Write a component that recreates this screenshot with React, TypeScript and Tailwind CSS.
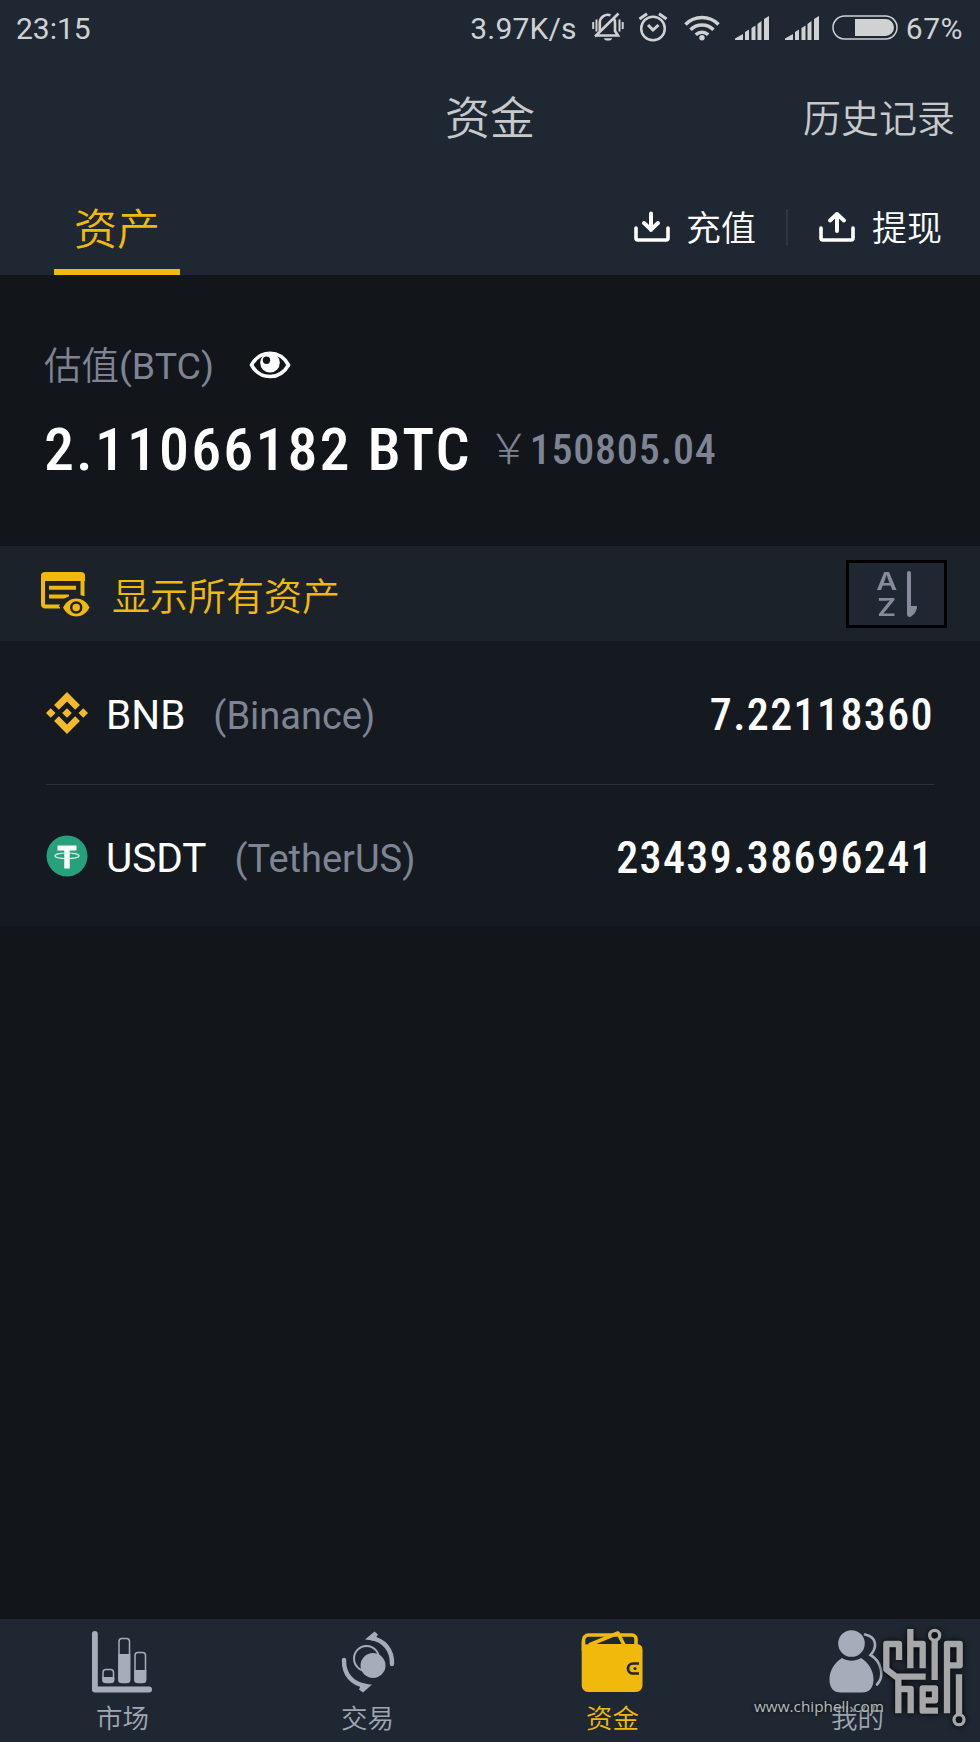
import React, { useState } from "react";

type Asset = {
  symbol: string;
  name: string;
  amount: string;
  icon: React.ReactNode;
};

const BnbIcon = () => (
  <svg width="42" height="42" viewBox="0 0 126.6 126.6" fill="#f3ba2f">
    <path d="M38.7 53.2 63.3 28.6l24.6 24.6 14.3-14.3L63.3 0 24.4 38.9zM0 63.3 14.3 49l14.3 14.3-14.3 14.3zM38.7 73.4 63.3 98l24.6-24.6 14.3 14.3-38.9 38.9-38.9-38.9zM98 63.3 112.3 49l14.3 14.3-14.3 14.3zM77.8 63.3 63.3 48.8 48.8 63.3l14.5 14.5z" />
  </svg>
);

const TetherIcon = () => (
  <svg width="42" height="42" viewBox="0 0 42 42" fill="none">
    <circle cx="21" cy="21" r="20.5" fill="#26a17b" />
    <path d="M11.5 10.5h19v5h-6.8v18h-5.4v-18h-6.8z" fill="#fff" />
    <ellipse cx="21" cy="20.8" rx="12.2" ry="2.8" stroke="#d5efe6" strokeWidth="1.2" />
  </svg>
);

const assets: Asset[] = [
  { symbol: "BNB", name: "Binance", amount: "7.22118360", icon: <BnbIcon /> },
  { symbol: "USDT", name: "TetherUS", amount: "23439.38696241", icon: <TetherIcon /> },
];

const SignalIcon = () => (
  <svg width="34" height="24" viewBox="0 0 34 24" fill="currentColor">
    <path d="M0 24v-1.5L8 18v6zM10 24v-8l4-2.5V24zM16.5 24V12l4-2.5V24zM22.5 24V8l4-3v19zM29 24V3l5-3v24z" />
  </svg>
);

const StatusBar = () => (
  <div className="flex h-[57px] items-center pl-[16px] pr-[17px] text-[30px] text-[#cfd1d3]">
    <span>23:15</span>
    <span className="ml-auto tracking-[0.2px]">3.97K/s</span>
    <svg className="ml-[15px] -mt-[3px]" width="32" height="30" viewBox="0 0 32 30" fill="none" stroke="currentColor">
      <path d="M5 23.5h21l-3-4.5v-8.5a7 7 0 0 0-1.5-4.5M18.5 3.3a8 8 0 0 0-10.7 7.2V19" strokeWidth="2.6" />
      <path d="M3 24.5 26.5 1.5" strokeWidth="2.6" />
      <path d="M12 26.2h8a4 2.4 0 0 1-8 0z" fill="currentColor" stroke="none" />
      <path d="M4.5 7.5v12M1.2 10v7M27.5 7.5v12M30.7 10v7" strokeWidth="2" />
    </svg>
    <svg className="ml-[14px] -mt-[3px]" width="30" height="30" viewBox="0 0 30 30" fill="none" stroke="currentColor">
      <circle cx="15" cy="16.5" r="11.8" strokeWidth="2.5" />
      <path d="m10 13 5 5 5.5-5" strokeWidth="3" />
      <path d="M1.5 7 9 1.8M28.5 7 21 1.8" strokeWidth="3" />
    </svg>
    <svg className="ml-[16px] -mt-[3px]" width="36" height="27" viewBox="0 0 36 27" fill="none" stroke="currentColor" strokeWidth="3.5">
      <path d="M1.5 10.5a23 23 0 0 1 33 0M6.5 15.8a16 16 0 0 1 23 0M11.8 20.8a9 9 0 0 1 12.4 0" />
      <circle cx="18" cy="23.7" r="2.7" fill="currentColor" stroke="none" />
    </svg>
    <span className="ml-[15px] -mt-[2px]">
      <SignalIcon />
    </span>
    <span className="ml-[16px] -mt-[2px]">
      <SignalIcon />
    </span>
    <svg className="ml-[13px] -mt-[3px]" width="66" height="25" viewBox="0 0 66 25" fill="none">
      <rect x="1" y="1" width="64" height="23" rx="11.5" stroke="currentColor" strokeWidth="1.5" />
      <path d="M23 4h30.5a8.5 8.5 0 0 1 0 17H23z" fill="currentColor" />
    </svg>
    <span className="ml-[8px] tracking-[0.5px]">67%</span>
  </div>
);

const TransferIcon = ({ up = false }: { up?: boolean }) => (
  <svg width="38" height="32" viewBox="0 0 38 32" fill="none" stroke="#fff" strokeWidth="4" strokeLinecap="round" strokeLinejoin="round">
    <path d="M3 17v10a2 2 0 0 0 2 2h28a2 2 0 0 0 2-2V17" strokeWidth="3.6" />
    {up ? (
      <path d="M19 20V3M12 9.5 19 3l7 6.5" />
    ) : (
      <path d="M18 2.5V19M11 12l7 6.5 7-6.5" />
    )}
  </svg>
);

const EyeIcon = () => (
  <svg width="42" height="28" viewBox="0 0 42 28" fill="none">
    <path d="M2.5 14C7 6 13.5 2.3 21 2.3S35 6 39.5 14C35 22 28.5 25.5 21 25.5S7 22 2.5 14z" stroke="#fff" strokeWidth="3.6" strokeLinejoin="round" />
    <circle cx="21" cy="11.8" r="9.8" fill="#fff" />
    <circle cx="17.5" cy="9.2" r="3.7" fill="#12161b" />
  </svg>
);

const ShowAssetsIcon = () => (
  <svg className="mt-[3px]" width="50" height="46" viewBox="0 0 50 46" fill="none">
    <path d="M20 34.5H5a2.5 2.5 0 0 1-2-2.5V4.5h39.5V24" stroke="#f0b90b" strokeWidth="4" />
    <path d="M1 4a4 4 0 0 1 4-4h36a4 4 0 0 1 4 4v5H1z" fill="#f0b90b" />
    <path d="M9 15.7h27M9 24.5h20" stroke="#f0b90b" strokeWidth="4" />
    <path d="M20.5 35.5C24 29 29 24.5 36.5 24.5S47 29 51 35.5" stroke="#1b222a" strokeWidth="4" />
    <path d="M23 35.5C26 29.5 31 26.5 36.2 26.5S46.5 29.5 49.5 35.5C46.5 41.5 41.4 44.5 36.2 44.5S26 41.5 23 35.5z" fill="#f0b90b" />
    <circle cx="36.2" cy="35.5" r="5" stroke="#1b222a" strokeWidth="2.5" />
  </svg>
);

const MarketIcon = () => (
  <svg width="60" height="62" viewBox="0 0 60 62" fill="none" stroke="#a6adba">
    <path d="M2.8 3v55.5H57" strokeWidth="6" strokeLinecap="round" strokeLinejoin="round" />
    <g strokeWidth="1.5">
      <rect x="11" y="38.5" width="10.5" height="13" rx="3" />
      <rect x="27" y="7.5" width="10.5" height="44" rx="3" />
      <rect x="43" y="21.5" width="10.5" height="30" rx="3" />
    </g>
    <path d="M10.3 46h12v3a3 3 0 0 1-3 3h-6a3 3 0 0 1-3-3zM26.3 23h12v26a3 3 0 0 1-3 3h-6a3 3 0 0 1-3-3zM42.3 39h12v10a3 3 0 0 1-3 3h-6a3 3 0 0 1-3-3z" fill="#a6adba" stroke="none" />
  </svg>
);

const TradeIcon = () => (
  <svg width="54" height="62" viewBox="0 0 54 62" fill="none" stroke="#a6adba">
    <circle cx="25.5" cy="27.5" r="12.5" strokeWidth="2" />
    <circle cx="32" cy="34.5" r="12.5" fill="#a6adba" stroke="none" />
    <path d="M30 7C43 9 51.5 19 51 33M25 55C11 53 2.5 43 3 29" strokeWidth="4.4" strokeLinecap="round" />
    <path d="M24 8.5 33.5.5l3.500 3-4 6zM31 53.5l-9 8-4-3 2.5-5.5z" fill="#a6adba" stroke="none" />
  </svg>
);

const WalletIcon = () => (
  <svg width="62" height="62" viewBox="0 0 62 62" fill="none">
    <path d="M2.5 20V9a5 5 0 0 1 5-5H51a4 4 0 0 1 4 4v8" stroke="#f0b90b" strokeWidth="3.6" />
    <path d="M8 14 37 2l6 12" stroke="#f0b90b" strokeWidth="3.6" strokeLinejoin="round" />
    <path d="M.7 10C4 15 6 13 9 13h47a5.5 5.5 0 0 1 5.5 5.5v36A6.5 6.5 0 0 1 55 61H7a6.5 6.5 0 0 1-6.3-6.5z" fill="#f0b90b" />
    <path d="M58 32.5h-6a5 5 0 0 0 0 10h6" stroke="#1f2832" strokeWidth="2.7" />
    <circle cx="54" cy="37.5" r="1.6" fill="#1f2832" />
  </svg>
);

const ProfileIcon = () => (
  <svg width="54" height="63" viewBox="0 0 54 63" fill="none">
    <circle cx="22.5" cy="13.5" r="13.3" fill="#a6adba" />
    <path d="M13 28c6 3.5 13 3.5 19 0 8 5 12.5 13 12.5 21.5C44.5 58 40 62.5 33 62.5H12C4.5 62.5.5 58 .5 49.5.5 41 5 33 13 28z" fill="#a6adba" />
    <path d="M36 4.5c11 2 13 12 5.5 20.5C52 31 56 46 48 54.5" stroke="#a6adba" strokeWidth="2.6" strokeLinecap="round" />
  </svg>
);

const navItems = [
  { label: "市场", icon: <MarketIcon />, shift: "pr-[2px]" },
  { label: "交易", icon: <TradeIcon />, shift: "" },
  { label: "资金", icon: <WalletIcon />, shift: "pr-[2px]" },
  { label: "我的", icon: <ProfileIcon />, shift: "pr-[3px]" },
];

const Watermark = () => (
  <div className="pointer-events-none absolute right-0 bottom-0 h-[132px] w-[240px]">
    <svg className="drop-shadow-[0_0_3px_#000000]" width="240" height="132" viewBox="0 0 720 396" fill="none" stroke="#a5a7a9" strokeWidth="19" strokeLinejoin="round">
      <path d="M477 150V102H439V178L468 200H557" />
      <path d="M511 57V175M511 102H548V175" />
      <path d="M584 92V210M621 310V102H659V166H621" />
      <path d="M475 200V310M475 237H512V310" />
      <path d="M594 302H548V235H585V271H548M657 193V312" />
      <circle cx="584" cy="76" r="15" strokeWidth="10" />
      <circle cx="657" cy="329" r="15" strokeWidth="10" />
    </svg>
    <span className="absolute top-[86px] left-[14px] font-['Open_Sans','Noto_Sans',sans-serif] text-[15.3px] leading-[20px] whitespace-nowrap text-[#b9bbbd] [text-shadow:0_0_4px_#000000]">
      www.chiphell.com
    </span>
  </div>
);

const App = () => {
  const [tab, setTab] = useState("资金");

  return (
    <div className="relative flex h-[1742px] w-[980px] flex-col overflow-hidden bg-[#12161b] font-[Roboto,'Noto_Sans_CJK_SC',sans-serif] text-white">
      <header className="h-[275px] bg-[#1f2832]">
        <StatusBar />
        <div className="grid h-[120px] grid-cols-3 items-center pt-[4px] pr-[25px] pl-[25px] text-[#c8c9cb]">
          <span />
          <h1 className="text-center text-[45px] leading-none font-[350]">资金</h1>
          <span className="text-right text-[38px] leading-none font-[350]">历史记录</span>
        </div>
        <div className="flex h-[98px] items-stretch pr-[38px] pl-[54px]">
          <div className="flex w-[126px] items-center justify-center border-b-[6px] border-[#f0b90b] pt-[14px] text-[43px] leading-none font-[350] text-[#f0b90b]">
            资产
          </div>
          {/* deposit / withdraw */}
          <div className="ml-auto flex items-center pt-[2px] text-[35px] leading-none font-[350]">
            <TransferIcon />
            <span className="mt-[5px] ml-[15px]">充值</span>
            <div className="mx-[30px] h-[36px] w-[2px] bg-[#2f3842]" />
            <TransferIcon up />
            <span className="mt-[5px] ml-[16px]">提现</span>
          </div>
        </div>
      </header>

      {/* total value */}
      <section className="h-[271px] pt-[66px] pl-[44px]">
        <div className="flex h-[48px] items-center">
          <span className="mt-[3px] text-[37.5px] leading-none font-[350] text-[#7e8493]">
            估值<span className="font-normal">(BTC)</span>
          </span>
          <span className="ml-[35px]">
            <EyeIcon />
          </span>
        </div>
        <div className="mt-[26px] flex h-[70px] items-center">
          <span className="font-['Roboto_Condensed',Roboto] text-[60px] leading-none font-medium tracking-[2.1px]">
            2.11066182 BTC
          </span>
          <span className="ml-[16px] text-[42px] leading-none text-[#7e8493]">
            <span className="font-light">￥</span>
            <span className="font-['Roboto_Condensed',Roboto] font-medium tracking-[0.8px]">150805.04</span>
          </span>
        </div>
      </section>

      <section className="flex h-[95px] items-center bg-[#1b222a] pr-[33px] pl-[40px]">
        <ShowAssetsIcon />
        <span className="mt-[7px] ml-[22px] text-[38px] leading-none font-[350] text-[#f0b90b]">显示所有资产</span>
        <button className="ml-auto flex h-[68px] w-[101px] items-center justify-center gap-[12px] border-[3px] border-black bg-[#1f2832] pl-[2px] text-[#868c9b]">
          <span className="flex scale-x-120 flex-col items-center pt-[2px] font-[Inter,sans-serif] text-[24px] leading-[26px] font-semibold">
            <span>A</span>
            <span>Z</span>
          </span>
          <svg width="10" height="46" viewBox="0 0 10 46" fill="currentColor">
            <path d="M0 2a2 2 0 0 1 4 0v33h5a1 1 0 0 1 1 1c0 4-4 9-7 10-2 0-3-1-3-3z" />
          </svg>
        </button>
      </section>

      <section className="h-[285px] bg-[#151a21] px-[46px]">
        {assets.map((asset, i) => (
          <div
            key={asset.symbol}
            className={`flex items-center ${i === 0 ? "h-[144px] border-b border-[#29323a]" : "h-[141px]"}`}
          >
            {asset.icon}
            <span className="mt-[5px] ml-[18px] text-[40.5px] leading-none">{asset.symbol}</span>
            <span className="mt-[6px] ml-[28px] text-[38px] leading-none text-[#7e8493]">({asset.name})</span>
            <span className="mt-[5px] ml-auto font-['Roboto_Condensed',Roboto] text-[44px] leading-none font-medium tracking-[1.4px]">
              {asset.amount}
            </span>
          </div>
        ))}
      </section>

      <nav className="mt-auto grid h-[123px] grid-cols-4 bg-[#1f2832]">
        {navItems.map((item) => (
          <button
            key={item.label}
            onClick={() => setTab(item.label)}
            className="flex flex-col items-center pt-[11px]"
          >
            <span className={`flex h-[63px] items-center ${item.shift}`}>{item.icon}</span>
            <span
              className={`mt-[11px] text-[26.5px] leading-[30px] font-[350] ${tab === item.label ? "text-[#f0b90b]" : "text-[#a0a7b3]"}`}
            >
              {item.label}
            </span>
          </button>
        ))}
      </nav>
      <Watermark />
    </div>
  );
};

export default App;
